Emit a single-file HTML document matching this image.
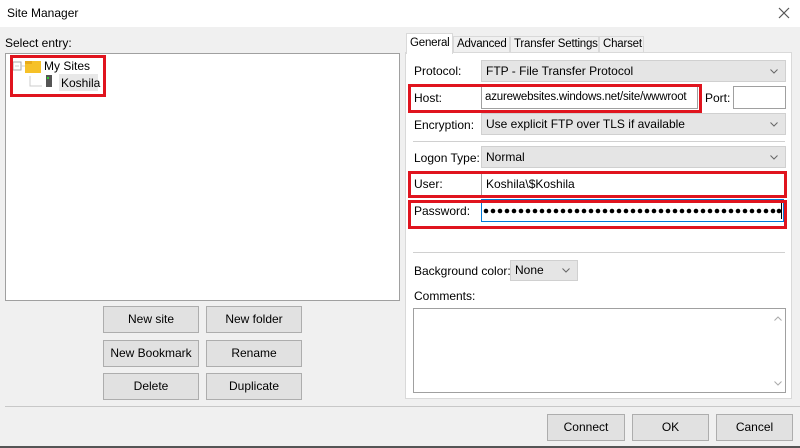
<!DOCTYPE html>
<html><head><style>
body{margin:0;width:800px;height:448px;background:#f0f0f0;font-family:"Liberation Sans",sans-serif;font-size:12px;color:#000;position:relative;overflow:hidden}
.a{position:absolute;box-sizing:border-box;white-space:nowrap}
.btn{position:absolute;box-sizing:border-box;background:#e1e1e1;border:1px solid #adadad;text-align:center;font-size:12px}
.sel{position:absolute;box-sizing:border-box;background:#e5e5e5;border:1px solid #d0d0d0;padding-left:4px;white-space:nowrap}
.inp{position:absolute;box-sizing:border-box;background:#fff;border:1px solid #a0a0a0;padding-left:4px;white-space:nowrap;overflow:hidden}
.red{position:absolute;box-sizing:border-box;border:3px solid #e0141e}
.chev{position:absolute;right:7px;top:8px}
.t{font-size:11.5px;letter-spacing:-0.2px}
</style></head><body>
<div class="a" style="left:0;top:0;width:800px;height:27px;background:#fff"></div>
<div class="a" style="left:7px;top:6px;font-size:12px">Site Manager</div>
<svg class="a" style="left:778px;top:7px" width="12" height="12"><path d="M1 1L11 11M11 1L1 11" stroke="#555" stroke-width="1.2"/></svg>
<div class="a" style="left:5px;top:36px">Select entry:</div>
<div class="a" style="left:5px;top:53px;width:395px;height:248px;background:#fff;border:1px solid #a0a0a0"></div>
<svg class="a" style="left:12px;top:60px" width="40" height="32"><rect x="1" y="2" width="8" height="8" fill="none" stroke="#aaa"/><path d="M3 6H7M9 6H13M18 16V26H30" stroke="#ccc" fill="none"/><rect x="13" y="1" width="16" height="12" fill="#f6c128"/><rect x="13" y="1" width="7" height="3" fill="#e8ab1a"/><rect x="34" y="15" width="6" height="12" fill="#555"/><rect x="35" y="17" width="2" height="2" fill="#3c3"/></svg>
<div class="a" style="left:44px;top:59px">My Sites</div>
<div class="a" style="left:59px;top:74px;width:39px;height:17px;background:#e8e8e8"></div>
<div class="a" style="left:61px;top:76px">Koshila</div>
<div class="red" style="left:10px;top:55px;width:96px;height:42px"></div>
<div class="btn" style="left:103px;top:306px;width:96px;height:27px;line-height:25px">New site</div>
<div class="btn" style="left:206px;top:306px;width:96px;height:27px;line-height:25px">New folder</div>
<div class="btn" style="left:103px;top:340px;width:96px;height:27px;line-height:25px">New Bookmark</div>
<div class="btn" style="left:206px;top:340px;width:96px;height:27px;line-height:25px">Rename</div>
<div class="btn" style="left:103px;top:373px;width:96px;height:27px;line-height:25px">Delete</div>
<div class="btn" style="left:206px;top:373px;width:96px;height:27px;line-height:25px">Duplicate</div>
<div class="a" style="left:5px;top:406px;width:795px;height:1px;background:#c8c8c8"></div>
<div class="btn" style="left:547px;top:414px;width:78px;height:27px;line-height:25px">Connect</div>
<div class="btn" style="left:632px;top:414px;width:77px;height:27px;line-height:25px">OK</div>
<div class="btn" style="left:716px;top:414px;width:77px;height:27px;line-height:25px">Cancel</div>
<div class="a" style="left:0;top:446px;width:800px;height:2px;background:#555"></div>
<!-- tabs -->
<div class="a" style="left:405px;top:52px;width:387px;height:347px;background:#fff;border:1px solid #d9d9d9"></div>
<div class="a t" style="left:406px;top:33px;width:47px;height:21px;background:#fff;border:1px solid #d9d9d9;border-bottom:none;padding:3px 0 0 3px">General</div>
<div class="a t" style="left:453px;top:36px;width:57px;height:17px;background:#f0f0f0;border:1px solid #d9d9d9;padding:1px 0 0 3px;overflow:hidden">Advanced</div>
<div class="a t" style="left:510px;top:36px;width:89px;height:17px;background:#f0f0f0;border:1px solid #d9d9d9;padding:1px 0 0 3px;overflow:hidden">Transfer Settings</div>
<div class="a t" style="left:599px;top:36px;width:45px;height:17px;background:#f0f0f0;border:1px solid #d9d9d9;padding:1px 0 0 3px;overflow:hidden">Charset</div>
<div class="a" style="left:414px;top:64px">Protocol:</div>
<div class="sel" style="left:481px;top:60px;width:305px;height:22px;line-height:20px">FTP - File Transfer Protocol<svg class="chev" width="8" height="5"><path d="M0.5 0.5L4 4L7.5 0.5" stroke="#666" fill="none"/></svg></div>
<div class="a" style="left:414px;top:91px">Host:</div>
<div class="inp t" style="left:481px;top:86px;width:217px;height:23px;line-height:21px;padding-left:3px">azurewebsites.windows.net/site/wwwroot</div>
<div class="a" style="left:705px;top:91px">Port:</div>
<div class="inp" style="left:733px;top:86px;width:53px;height:23px"></div>
<div class="red" style="left:408px;top:84px;width:294px;height:29px"></div>
<div class="a" style="left:414px;top:118px">Encryption:</div>
<div class="sel" style="left:481px;top:113px;width:305px;height:22px;line-height:20px">Use explicit FTP over TLS if available<svg class="chev" width="8" height="5"><path d="M0.5 0.5L4 4L7.5 0.5" stroke="#666" fill="none"/></svg></div>
<div class="a" style="left:413px;top:141px;width:372px;height:1px;background:#d0d0d0"></div>
<div class="a" style="left:414px;top:151px">Logon Type:</div>
<div class="sel" style="left:481px;top:146px;width:305px;height:22px;line-height:20px">Normal<svg class="chev" width="8" height="5"><path d="M0.5 0.5L4 4L7.5 0.5" stroke="#666" fill="none"/></svg></div>
<div class="a" style="left:414px;top:177px">User:</div>
<div class="inp" style="left:481px;top:173px;width:304px;height:23px;line-height:21px">Koshila\$Koshila</div>
<div class="red" style="left:408px;top:171px;width:379px;height:27px"></div>
<div class="a" style="left:414px;top:204px">Password:</div>
<div class="inp" style="left:481px;top:199px;width:303px;height:23px;border-color:#0078d7;padding:0">
<svg width="300" height="21" style="position:absolute;left:1px;top:0"><g fill="#000">
<circle cx="3" cy="11" r="2.3"/><circle cx="10" cy="11" r="2.3"/><circle cx="17" cy="11" r="2.3"/><circle cx="24" cy="11" r="2.3"/><circle cx="31" cy="11" r="2.3"/><circle cx="38" cy="11" r="2.3"/><circle cx="45" cy="11" r="2.3"/><circle cx="52" cy="11" r="2.3"/><circle cx="59" cy="11" r="2.3"/><circle cx="66" cy="11" r="2.3"/><circle cx="73" cy="11" r="2.3"/><circle cx="80" cy="11" r="2.3"/><circle cx="87" cy="11" r="2.3"/><circle cx="94" cy="11" r="2.3"/><circle cx="101" cy="11" r="2.3"/><circle cx="108" cy="11" r="2.3"/><circle cx="115" cy="11" r="2.3"/><circle cx="122" cy="11" r="2.3"/><circle cx="129" cy="11" r="2.3"/><circle cx="136" cy="11" r="2.3"/><circle cx="143" cy="11" r="2.3"/><circle cx="150" cy="11" r="2.3"/><circle cx="157" cy="11" r="2.3"/><circle cx="164" cy="11" r="2.3"/><circle cx="171" cy="11" r="2.3"/><circle cx="178" cy="11" r="2.3"/><circle cx="185" cy="11" r="2.3"/><circle cx="192" cy="11" r="2.3"/><circle cx="199" cy="11" r="2.3"/><circle cx="206" cy="11" r="2.3"/><circle cx="213" cy="11" r="2.3"/><circle cx="220" cy="11" r="2.3"/><circle cx="227" cy="11" r="2.3"/><circle cx="234" cy="11" r="2.3"/><circle cx="241" cy="11" r="2.3"/><circle cx="248" cy="11" r="2.3"/><circle cx="255" cy="11" r="2.3"/><circle cx="262" cy="11" r="2.3"/><circle cx="269" cy="11" r="2.3"/><circle cx="276" cy="11" r="2.3"/><circle cx="283" cy="11" r="2.3"/><circle cx="290" cy="11" r="2.3"/><circle cx="296" cy="11" r="2.3"/></g><rect x="298" y="3" width="1" height="16" fill="#000"/></svg></div>
<div class="red" style="left:408px;top:200px;width:379px;height:29px"></div>
<div class="a" style="left:413px;top:252px;width:372px;height:1px;background:#d0d0d0"></div>
<div class="a" style="left:414px;top:264px">Background color:</div>
<div class="sel" style="left:510px;top:260px;width:68px;height:21px;line-height:19px">None<svg class="chev" width="8" height="5" style="top:7px"><path d="M0.5 0.5L4 4L7.5 0.5" stroke="#666" fill="none"/></svg></div>
<div class="a" style="left:414px;top:289px">Comments:</div>
<div class="a" style="left:413px;top:308px;width:373px;height:85px;background:#fff;border:1px solid #a0a0a0"></div>
<svg class="a" style="left:774px;top:316px" width="8" height="5"><path d="M0.5 4.5L4 1L7.5 4.5" stroke="#aaa" fill="none"/></svg>
<svg class="a" style="left:774px;top:381px" width="8" height="5"><path d="M0.5 0.5L4 4L7.5 0.5" stroke="#aaa" fill="none"/></svg>
</body></html>
